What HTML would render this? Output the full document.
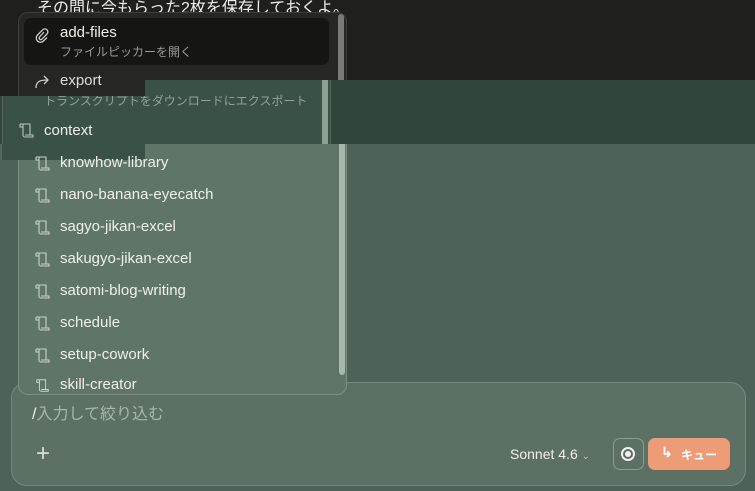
<!DOCTYPE html>
<html><head><meta charset="utf-8"><style>
*{margin:0;padding:0;box-sizing:border-box}
body{width:755px;height:491px;overflow:hidden;position:relative;background:#4e6357;font-family:"Liberation Sans","Noto Sans CJK JP",sans-serif;}
.abs{position:absolute}
.t{font-size:15px;color:#f0f0ea;white-space:nowrap}
.s{font-size:12px;white-space:nowrap}
</style></head><body>
<!-- top dark region -->
<div class="abs" style="left:0;top:0;width:755px;height:80px;background:#1f1f1d;overflow:hidden">
  <div class="abs" style="left:37px;top:-6px;font-size:16px;color:#eee;white-space:nowrap">その間に今もらった2枚を保存しておくよ。</div>
  <div class="abs" style="left:18px;top:12px;width:329px;height:120px;background:#262624;border:1px solid #3e3e3b;border-radius:10px"></div>
  <div class="abs" style="left:24px;top:18px;width:305px;height:47px;background:#151513;border-radius:7px"></div>
  <div class="abs" style="left:338px;top:14px;width:6px;height:70px;background:#7a7a76;border-radius:3px"></div>
  <svg class="abs" style="left:34px;top:26px" width="16" height="18" viewBox="0 0 16 18" fill="none" stroke="#ccc" stroke-width="1.3"><path d="M10 6 L5.5 11 a1.6 1.6 0 0 0 2.3 2.2 L13 8 a3 3 0 0 0 -4.3 -4.2 L3.5 9 a4.2 4.2 0 0 0 6 6 L13 11.5"/></svg>
  <div class="abs t" style="left:60px;top:24px">add-files</div>
  <div class="abs s" style="left:60px;top:43px;color:#9a9a95">ファイルピッカーを開く</div>
  <svg class="abs" style="left:34px;top:73px" width="18" height="16" viewBox="0 0 18 16" fill="none" stroke="#ccc" stroke-width="1.3"><path d="M2 15 C2 9 5 7 14 7 M10 3 L14 7 L10 11"/></svg>
  <div class="abs t" style="left:60px;top:72px;color:#ddd">export</div>
</div>
<!-- glitched band -->
<div class="abs" style="left:0;top:80px;width:755px;height:64px;background:#30463a;overflow:hidden">
  <div class="abs" style="left:2px;top:-68px;width:329px;height:300px;background:#3a5246;border:1px solid #54695c;border-radius:10px"></div>
  <div class="abs" style="left:322px;top:0;width:6px;height:64px;background:#8ba192"></div>
  <div class="abs s" style="left:44px;top:12px;color:#8fa497">トランスクリプトをダウンロードにエクスポート</div>
  <svg class="abs" style="left:18px;top:42px" width="17" height="17" viewBox="0 0 17 17" fill="none" stroke="#b8c6bc" stroke-width="1.1"><path d="M2 2 h10 v11 M2 2 v3 h3 M5 2 v11 a2 2 0 0 0 2 2 h8 v-2 h-8"/></svg>
  <div class="abs t" style="left:44px;top:42px">context</div>
</div>
<!-- left part: dark until 96 -->
<div class="abs" style="left:0;top:80px;width:145px;height:16px;background:#1f1f1d;overflow:hidden">
  <div class="abs" style="left:18px;top:-68px;width:200px;height:120px;background:#262624;border-left:1px solid #3e3e3b"></div>
  <svg class="abs" style="left:34px;top:-7px" width="18" height="16" viewBox="0 0 18 16" fill="none" stroke="#ccc" stroke-width="1.3"><path d="M2 15 C2 9 5 7 14 7 M10 3 L14 7 L10 11"/></svg>
  <div class="abs t" style="left:60px;top:-8px;color:#ddd">export</div>
</div>
<div class="abs" style="left:0;top:144px;width:145px;height:16px;background:#3a5246;border-left:2px solid #54695c"></div>
<!-- lower menu -->
<div class="abs" style="left:18px;top:160px;width:329px;height:235px;background:#5f7567;border:1px solid #7d9184;border-top:none;border-radius:0 0 10px 10px"></div>
<div class="abs" style="left:145px;top:144px;width:202px;height:16px;background:#5f7567;border-right:1px solid #7d9184"></div>
<div class="abs" style="left:339px;top:144px;width:6px;height:231px;background:#a7b9ad;border-radius:0 0 3px 3px"></div>
<div id="items"></div>
<script>
var n=["knowhow-library","nano-banana-eyecatch","sagyo-jikan-excel","sakugyo-jikan-excel","satomi-blog-writing","schedule","setup-cowork"];
var h="";n.forEach(function(x,i){var y=154+i*32;
h+='<svg class="abs" style="left:34px;top:'+(y+1)+'px" width="17" height="17" viewBox="0 0 17 17" fill="none" stroke="#c9d4cc" stroke-width="1.1"><path d="M2 2 h10 v11 M2 2 v3 h3 M5 2 v11 a2 2 0 0 0 2 2 h8 v-2 h-8"/></svg>';
h+='<div class="abs t" style="left:60px;top:'+(y)+'px">'+x+'</div>';});
document.getElementById("items").innerHTML=h;
</script>
<!-- input box -->
<div class="abs" style="left:11px;top:382px;width:735px;height:104px;background:#5c7064;border:1px solid #77897d;border-radius:16px"></div>
<div class="abs" style="left:18px;top:380px;width:329px;height:15px;background:#5f7567;border:1px solid #7d9184;border-top:none;border-radius:0 0 10px 10px"></div>
<div class="abs t" style="left:60px;top:376px;">skill-creator</div>
<svg class="abs" style="left:34px;top:378px" width="17" height="15" viewBox="0 0 17 17" fill="none" stroke="#c9d4cc" stroke-width="1.1"><path d="M2 2 h10 v11 M2 2 v3 h3 M5 2 v11 a2 2 0 0 0 2 2 h8 v-2 h-8"/></svg>
<div class="abs" style="left:32px;top:400px;font-size:16px;color:#a9b6ad;white-space:nowrap"><span style="color:#f4f4f0">/</span>入力して絞り込む</div>
<div class="abs" style="left:36px;top:442px;font-size:24px;color:#d6ded8;font-weight:300;line-height:24px">+</div>
<div class="abs" style="left:510px;top:446px;font-size:14px;color:#eef0ea;white-space:nowrap">Sonnet 4.6 <span style="font-size:10px;color:#bcc6bf">&#8964;</span></div>
<div class="abs" style="left:613px;top:438px;width:31px;height:32px;border:1px solid #8c9d91;border-radius:7px"></div>
<div class="abs" style="left:621px;top:447px;width:14px;height:14px;border:2px solid #f2f2ee;border-radius:50%"></div>
<div class="abs" style="left:625px;top:451px;width:6px;height:6px;background:#f2f2ee;border-radius:50%"></div>
<div class="abs" style="left:648px;top:438px;width:82px;height:32px;background:#ee9c78;border-radius:7px"></div>
<div class="abs" style="left:661px;top:444px;font-size:14px;color:#fff;font-weight:bold">↳</div>
<div class="abs" style="left:681px;top:446px;font-size:12px;color:#fff;font-weight:bold;white-space:nowrap">キュー</div>
</body></html>
